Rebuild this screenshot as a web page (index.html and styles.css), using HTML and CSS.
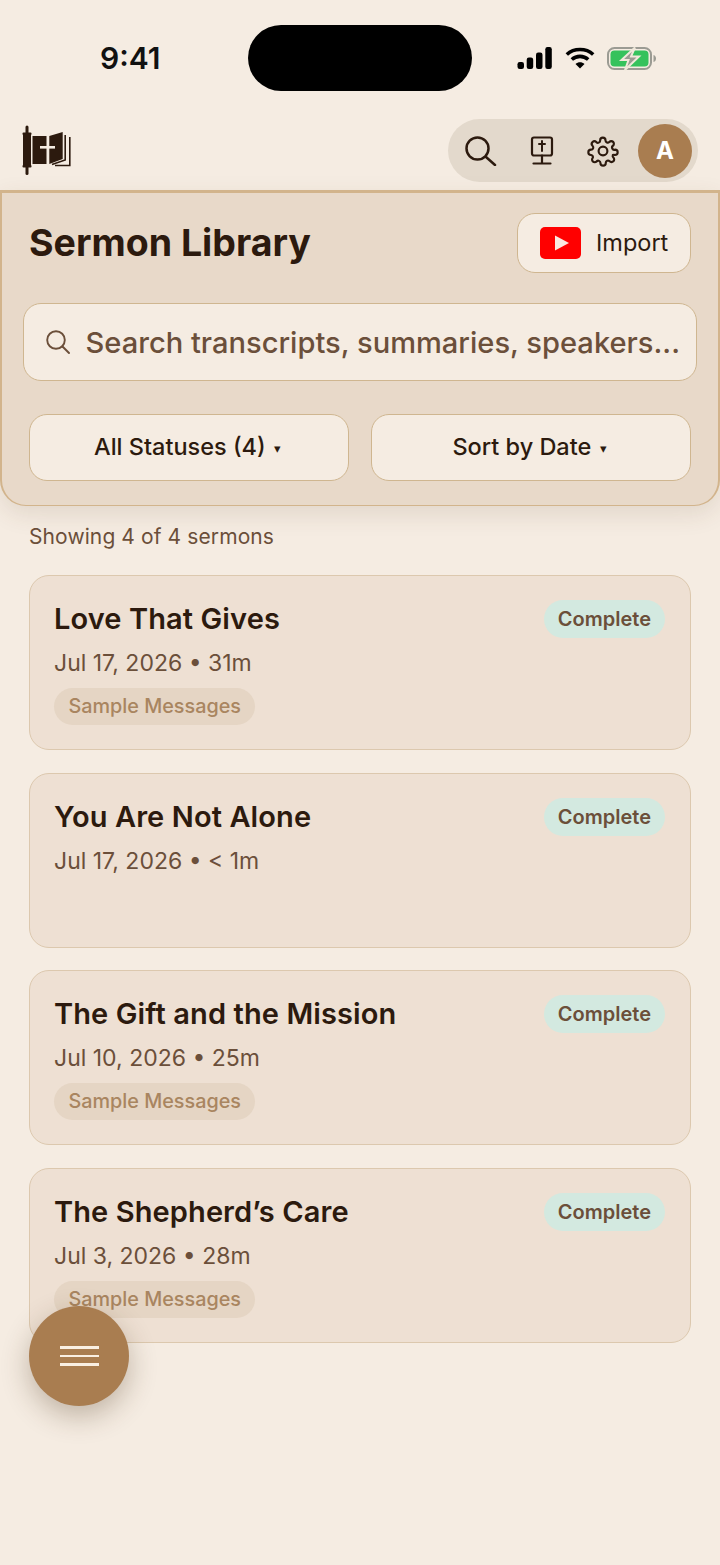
FILE: index.html
```html
<!DOCTYPE html>
<html lang="en">
<head>
  <meta charset="UTF-8">
  <meta name="viewport" content="width=device-width, initial-scale=1">
  <title>Sermon Library</title>
  <link rel="stylesheet" href="styles.css">
</head>
<body>
  <div class="status-bar">
    <div class="status-time">9:41</div>
    <div class="island"></div>
    <div class="status-icons">
      <svg width="35" height="22" viewBox="0 0 35 22"><rect x="0.500" y="15" width="6.500" height="7" rx="2.200"/><rect x="9.700" y="10.500" width="6.500" height="11.500" rx="2.200"/><rect x="19" y="5.500" width="6.500" height="16.500" rx="2.200"/><rect x="28.300" y="0" width="6.500" height="22" rx="2.200"/></svg>
      <svg width="30" height="22" viewBox="0 0 30 22" fill="none" stroke="#000" stroke-width="3.600"><path d="M1.800 7.500C9 .9 21 .9 28.200 7.500"/><path d="M6.800 12.500C11.500 8.300 18.500 8.300 23.200 12.500"/><path d="M15 21.500l-4.500-4.600c2.500-2.100 6.500-2.100 9 0z" fill="#000" stroke="none"/></svg>
      <svg width="50" height="25" viewBox="0 0 50 25"><rect x="1" y="2" width="43" height="21" rx="6.500" fill="none" stroke="#9b9b93" stroke-width="2"/><rect x="3.500" y="4.500" width="38" height="16" rx="4" fill="#35c25c"/><path d="M46.500 9c1.800.5 2.500 2 2.500 3.500s-.7 3-2.500 3.500z" fill="#9b9b93"/><path d="M28 1.500L14.500 14h7L18 24l14-13.500h-8z" fill="#9b9b93" stroke="#f0e8da" stroke-width="2"/></svg>
    </div>
  </div>

  <header class="app-header">
    <svg class="logo" width="49" height="50" viewBox="0 0 49 50" fill="#2c1a0e">
      <rect x="3.500" y="0.500" width="3" height="49.500" rx="1.500"/>
      <rect x="0.500" y="7.500" width="9" height="2.500" rx="1"/>
      <rect x="0.500" y="40" width="9" height="2.500" rx="1"/>
      <rect x="1" y="9" width="8" height="32"/>
      <rect x="10.500" y="11" width="14" height="28"/>
      <path d="M27.300 11L40.700 7V34L27.300 39z"/>
      <rect x="18" y="21" width="15" height="2.600" fill="#f5ece2"/>
      <path d="M30 39.500L43.200 35V10M33 40.500H47.800V12" fill="none" stroke="#2c1a0e" stroke-width="1.600"/>
    </svg>
    <div class="toolbar">
      <div class="tool-slot">
        <svg width="32" height="30" viewBox="0 0 32 30" fill="none" stroke="#2c1a0e" stroke-width="2.500" stroke-linecap="round"><circle cx="12.500" cy="12.500" r="11"/><path d="M21 21l9 8"/></svg>
      </div>
      <div class="tool-slot">
        <svg width="24" height="29" viewBox="0 0 24 29" fill="none" stroke="#2c1a0e" stroke-width="2.200" stroke-linecap="round"><rect x="2" y="1.500" width="20" height="18" rx="2"/><path d="M12 19.500V27.500M3.500 27.500h17"/><path d="M12 5v10M9 8h6" stroke-width="2"/></svg>
      </div>
      <div class="tool-slot">
        <svg width="32" height="32" viewBox="0 0 24 24" fill="none" stroke="#2c1a0e" stroke-width="1.600" stroke-linecap="round" stroke-linejoin="round"><circle cx="12" cy="12" r="3.300"/><path d="M19.400 15a1.650 1.650 0 0 0 .33 1.820l.06.06a2 2 0 1 1-2.830 2.830l-.06-.06a1.650 1.650 0 0 0-2.820 1.170V21a2 2 0 1 1-4 0v-.09a1.650 1.650 0 0 0-2.820-1.130l-.06.06a2 2 0 1 1-2.830-2.830l.06-.06A1.650 1.650 0 0 0 3.090 15H3a2 2 0 1 1 0-4h.09a1.650 1.650 0 0 0 1.130-2.820l-.06-.06a2 2 0 1 1 2.830-2.830l.06.06A1.650 1.650 0 0 0 9.870 4.220V4a2 2 0 1 1 4 0v.09a1.650 1.650 0 0 0 2.820 1.130l.06-.06a2 2 0 1 1 2.830 2.830l-.06.06A1.650 1.650 0 0 0 20.910 11H21a2 2 0 1 1 0 4h-.09a1.650 1.650 0 0 0-1.510 0z"/></svg>
      </div>
      <div class="avatar">A</div>
    </div>
  </header>

  <section class="library-panel">
    <div class="panel-top">
      <h1>Sermon Library</h1>
      <button class="import-btn">
        <svg width="41" height="32" viewBox="0 0 41 32"><rect width="41" height="32" rx="5" fill="#ff0000"/><path d="M15 8.500l14 7.500-14 7.500z" fill="#fbe9e0"/></svg>
        Import
      </button>
    </div>
    <div class="search-box">
      <svg class="search-icon" width="24" height="24" viewBox="0 0 24 24" fill="none" stroke="#6b4f3a" stroke-width="1.900" stroke-linecap="round"><circle cx="10" cy="10" r="8.800"/><path d="M16.500 16.500l6.500 6.500"/></svg>
      <span>Search transcripts, summaries, speakers...</span>
    </div>
    <div class="filters">
      <button class="filter-btn">All Statuses (4) <span class="caret">▾</span></button>
      <button class="filter-btn">Sort by Date <span class="caret">▾</span></button>
    </div>
  </section>

  <p class="result-count">Showing 4 of 4 sermons</p>

  <div class="sermon-list">
    <article class="sermon-card">
      <div class="card-head">
        <h2>Love That Gives</h2>
        <span class="status">Complete</span>
      </div>
      <p class="meta">Jul 17, 2026 • 31m</p>
      <span class="tag">Sample Messages</span>
    </article>
    <article class="sermon-card">
      <div class="card-head">
        <h2>You Are Not Alone</h2>
        <span class="status">Complete</span>
      </div>
      <p class="meta">Jul 17, 2026 • &lt; 1m</p>
    </article>
    <article class="sermon-card">
      <div class="card-head">
        <h2>The Gift and the Mission</h2>
        <span class="status">Complete</span>
      </div>
      <p class="meta">Jul 10, 2026 • 25m</p>
      <span class="tag">Sample Messages</span>
    </article>
    <article class="sermon-card">
      <div class="card-head">
        <h2>The Shepherd’s Care</h2>
        <span class="status">Complete</span>
      </div>
      <p class="meta">Jul 3, 2026 • 28m</p>
      <span class="tag">Sample Messages</span>
    </article>
  </div>

  <button class="fab" aria-label="Menu">
    <span></span><span></span><span></span>
  </button>
</body>
</html>
```

FILE: styles.css
```css
* {
  box-sizing: border-box;
}
body {
  font-family: Inter, "Liberation Sans", sans-serif;
  background: #f5ece2;
  color: #2c1a0e;
  margin: 0;
  width: 720px;
  height: 1565px;
  overflow: hidden;
  position: relative;
}
button {
  font-family: inherit;
  cursor: pointer;
}
.status-bar {
  height: 119px;
  padding: 25px 63px 0 100px;
  display: flex;
  align-items: flex-start;
}
.status-time {
  font-size: 30px;
  font-weight: 600;
  color: #111;
  line-height: 66px;
  width: 148px;
}
.island {
  width: 224px;
  height: 66px;
  background: #000;
  border-radius: 33px;
}
.status-icons {
  height: 66px;
  width: 140px;
  margin-left: auto;
  display: flex;
  align-items: center;
  justify-content: space-between;
}
.app-header {
  height: 71px;
  padding: 0 22px;
  display: flex;
  justify-content: space-between;
  align-items: flex-start;
}
.logo {
  margin-top: 6px;
}
.toolbar {
  width: 250px;
  height: 63px;
  background: #e3d9cc;
  border-radius: 32px;
  display: flex;
  align-items: center;
  gap: 1px;
  padding: 0 6px 0 3px;
}
.tool-slot {
  width: 60px;
  display: flex;
  justify-content: center;
  align-items: center;
}
.avatar {
  width: 54px;
  height: 54px;
  margin-left: auto;
  border-radius: 50%;
  background: #a97d50;
  color: #fff;
  font-size: 24px;
  font-weight: 700;
  display: flex;
  align-items: center;
  justify-content: center;
}
.library-panel {
  height: 316px;
  background: #e8d9c9;
  border: 2px solid #d2b48c;
  border-top-width: 3px;
  border-bottom-width: 1.500px;
  border-radius: 0 0 26px 26px;
  box-shadow: 0 8px 24px rgba(90, 60, 30, 0.12);
  padding: 19px 27px 0;
  position: relative;
}
.panel-top {
  display: flex;
  justify-content: space-between;
  align-items: center;
  height: 61px;
}
h1 {
  font-size: 37.500px;
  font-weight: 700;
  margin: 0;
  color: #2c1a0e;
}
.import-btn {
  width: 174px;
  height: 60px;
  background: #f5ece2;
  border: 1.500px solid #cfb690;
  border-radius: 18px;
  display: flex;
  align-items: center;
  gap: 15px;
  padding: 0 0 0 22px;
  font-size: 23.500px;
  color: #2c1a0e;
}
.search-box {
  height: 78px;
  margin: 30px -6px 0 -6px;
  background: #f5ece2;
  border: 1.500px solid #cfb690;
  border-radius: 18px;
  display: flex;
  align-items: center;
  gap: 16px;
  padding-left: 21.500px;
  font-size: 29.100px;
  font-weight: 500;
  color: #6b4f3a;
  white-space: nowrap;
}
.search-icon {
  flex: none;
}
.filters {
  display: flex;
  gap: 22px;
  margin-top: 33px;
}
.filter-btn {
  flex: 1;
  height: 67px;
  padding: 0 3px 2px 0;
  background: #f5ece2;
  border: 1.500px solid #cfb690;
  border-radius: 18px;
  font-size: 23.500px;
  font-weight: 500;
  color: #2c1a0e;
}
.caret {
  font-size: 13px;
  margin-left: 2px;
  vertical-align: 2px;
}
.result-count {
  margin: 17px 0 0 29px;
  font-size: 21px;
  line-height: 28px;
  color: #6b4f3a;
  letter-spacing: 0.1px;
}
.sermon-list {
  margin: 24px 29px 0;
  display: flex;
  flex-direction: column;
  gap: 22.500px;
}
.sermon-card {
  height: 175px;
  background: #eee0d3;
  border: 1.500px solid #dcc8ae;
  border-radius: 20px;
  padding: 24px 25px 0 24px;
}
.card-head {
  display: flex;
  justify-content: space-between;
  align-items: flex-start;
}
h2 {
  font-size: 29px;
  font-weight: 600;
  letter-spacing: 0.1px;
  line-height: 37px;
  margin: 0;
  color: #2c1a0e;
}
.status {
  height: 38px;
  line-height: 38px;
  border-radius: 19px;
  background: #d3e9e0;
  color: #6b4f3a;
  font-size: 20px;
  font-weight: 600;
  padding: 0 14px;
}
.meta {
  margin: 11px 0 0;
  font-size: 23px;
  line-height: 28px;
  color: #6b4f3a;
}
.tag {
  display: inline-block;
  margin-top: 11px;
  height: 37px;
  line-height: 37px;
  padding: 0 14.500px;
  border-radius: 19px;
  background: #e5d5c4;
  color: #a98560;
  font-size: 19.800px;
  font-weight: 500;
}
.fab {
  position: absolute;
  left: 29px;
  top: 1306px;
  width: 100px;
  height: 100px;
  border: none;
  border-radius: 50%;
  background: #a97d50;
  box-shadow: 0 10px 28px rgba(70, 45, 20, 0.3);
  display: flex;
  flex-direction: column;
  align-items: center;
  justify-content: center;
  gap: 6px;
}
.fab span {
  display: block;
  width: 39px;
  height: 2.500px;
  background: #f9efe2;
}
```
